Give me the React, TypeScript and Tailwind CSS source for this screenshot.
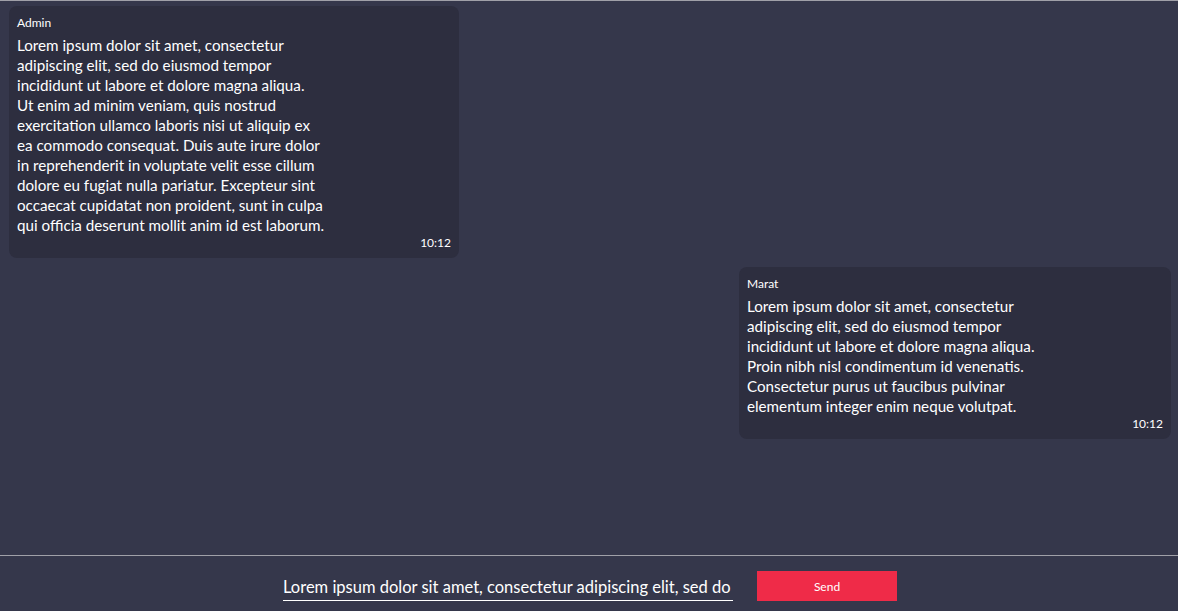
const admin = [
  "Lorem ipsum dolor sit amet, consectetur",
  "adipiscing elit, sed do eiusmod tempor",
  "incididunt ut labore et dolore magna aliqua.",
  "Ut enim ad minim veniam, quis nostrud",
  "exercitation ullamco laboris nisi ut aliquip ex",
  "ea commodo consequat. Duis aute irure dolor",
  "in reprehenderit in voluptate velit esse cillum",
  "dolore eu fugiat nulla pariatur. Excepteur sint",
  "occaecat cupidatat non proident, sunt in culpa",
  "qui officia deserunt mollit anim id est laborum.",
];
const marat = [
  "Lorem ipsum dolor sit amet, consectetur",
  "adipiscing elit, sed do eiusmod tempor",
  "incididunt ut labore et dolore magna aliqua.",
  "Proin nibh nisl condimentum id venenatis.",
  "Consectetur purus ut faucibus pulvinar",
  "elementum integer enim neque volutpat.",
];

function Bubble({ name, lines, time, width }: { name: string; lines: string[]; time: string; width: string }) {
  return (
    <div className={`${width} rounded-lg bg-[#2d2e3f] px-2 pt-[9px] pb-[7px] text-white`}>
      <div className="text-[12px] leading-4">{name}</div>
      <p className="mt-[4px] whitespace-nowrap text-[15.2px] leading-5">
        {lines.map((l, i) => (
          <span key={i} className="block">
            {l}
          </span>
        ))}
      </p>
      <div className="text-right text-[12px] leading-4">{time}</div>
    </div>
  );
}

export default function App() {
  return (
    <div className="flex h-[611px] flex-col border-t border-[#a0a0a8] bg-[#35374b] font-['Lato',sans-serif]">
      <div className="flex flex-1 flex-col gap-[9px] pt-[5px] pr-[7px] pl-[9px]">
        <div className="flex">
          <Bubble name="Admin" lines={admin} time="10:12" width="w-[450px]" />
        </div>
        <div className="flex justify-end">
          <Bubble name="Marat" lines={marat} time="10:12" width="w-[432px]" />
        </div>
      </div>
      <div className="flex h-[56px] items-end justify-center gap-6 border-t border-[#a0a0a8] pb-[10px] pl-[2px]">
        <input
          className="w-[450px] border-b border-white bg-transparent pb-[3px] text-[16.5px] leading-5 text-white outline-none"
          defaultValue="Lorem ipsum dolor sit amet, consectetur adipiscing elit, sed do eiusmod tempor"
        />
        <button className="h-[30px] w-[140px] bg-[#ef2b48] pt-[2px] text-[12px] text-white">Send</button>
      </div>
    </div>
  );
}
